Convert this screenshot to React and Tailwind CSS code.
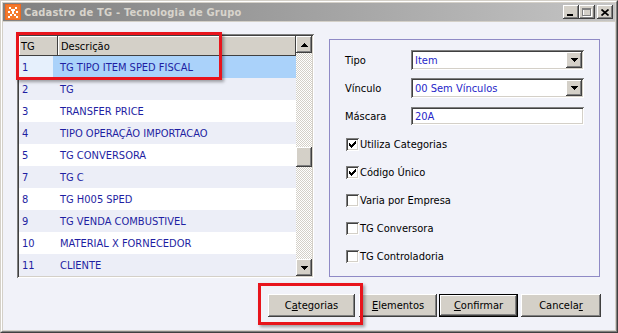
import React from "react";

const RAISED =
  "shadow-[inset_-1px_-1px_#404040,inset_1px_1px_#ffffff,inset_-2px_-2px_#808080,inset_2px_2px_#d4d0c8]";
const SUNKEN =
  "shadow-[inset_1px_1px_#808080,inset_-1px_-1px_#ffffff,inset_2px_2px_#404040,inset_-2px_-2px_#d4d0c8]";

const rows = [
  ["1", "TG TIPO ITEM SPED FISCAL"],
  ["2", "TG"],
  ["3", "TRANSFER PRICE"],
  ["4", "TIPO OPERAÇÃO IMPORTACAO"],
  ["5", "TG CONVERSORA"],
  ["7", "TG C"],
  ["8", "TG H005 SPED"],
  ["9", "TG VENDA COMBUSTIVEL"],
  ["10", "MATERIAL X FORNECEDOR"],
  ["11", "CLIENTE"],
];

function TriDown() {
  return (
    <svg width="7" height="4" viewBox="0 0 7 4" shapeRendering="crispEdges">
      <polygon points="0,0 7,0 3.5,4" fill="#000" />
    </svg>
  );
}
function TriUp() {
  return (
    <svg width="7" height="4" viewBox="0 0 7 4" shapeRendering="crispEdges">
      <polygon points="3.5,0 7,4 0,4" fill="#000" />
    </svg>
  );
}

function Combo({ value }) {
  return (
    <div className={`w-[173px] h-[20px] bg-white p-[2px] flex items-stretch ${SUNKEN}`}>
      <div className="flex-1 flex items-center pl-[2px] text-[#2626c8]">{value}</div>
      <div className={`w-[16px] bg-[#d4d0c8] flex items-center justify-center ${RAISED}`}>
        <TriDown />
      </div>
    </div>
  );
}

function Check({ checked, label }) {
  return (
    <div className="h-[28px] flex items-center pl-[1px]">
      <div className={`w-[13px] h-[13px] bg-white flex items-center justify-center ${SUNKEN}`}>
        {checked && (
          <svg width="7" height="7" viewBox="0 0 7 7" shapeRendering="crispEdges">
            <polygon points="0,2 2,4 7,-1 7,2 2,7 0,5" fill="#000" />
          </svg>
        )}
      </div>
      <span className="ml-[1px] text-black">{label}</span>
    </div>
  );
}

function Btn({ w, children, isDefault }) {
  const inner = (
    <div className={`h-full w-full bg-[#d4d0c8] flex items-center justify-center text-black ${RAISED}`}>
      {children}
    </div>
  );
  return (
    <div className={`h-[23px] ${w} ${isDefault ? "border border-black" : ""}`}>{inner}</div>
  );
}

function U({ children }) {
  return <span className="underline underline-offset-[1px]">{children}</span>;
}

export default function App() {
  return (
    <div className="relative w-[618px] h-[333px] overflow-hidden bg-[#d4d0c8] border border-t-[#d4d0c8] border-l-[#d4d0c8] border-r-[#404040] border-b-[#404040] font-['DejaVu_Sans_Condensed','DejaVu_Sans',sans-serif] [font-stretch:condensed] text-[11px] leading-none">
      <div className="flex flex-col h-full border border-t-white border-l-white border-r-[#808080] border-b-[#808080] p-[1px]">
        {/* Title bar */}
        <div className="h-[18px] shrink-0 flex items-center bg-linear-to-r from-[#808080] to-[#c4c4c4] pl-[2px] pr-[2px]">
          <svg width="16" height="16" viewBox="0 0 16 16" shapeRendering="crispEdges">
            <rect width="16" height="16" fill="#ee6a22" />
            <rect x="1" y="1" width="14" height="14" fill="#f47a2c" />
            <rect x="4" y="3" width="2" height="2" fill="#fff" />
            <rect x="10" y="3" width="2" height="2" fill="#fff" />
            <rect x="6" y="5" width="4" height="2" fill="#fff" />
            <rect x="3" y="7" width="2" height="2" fill="#fff" />
            <rect x="7" y="7" width="2" height="3" fill="#fff" />
            <rect x="11" y="7" width="2" height="2" fill="#fff" />
            <rect x="5" y="10" width="2" height="2" fill="#fff" />
            <rect x="9" y="10" width="2" height="2" fill="#fff" />
            <rect x="3" y="12" width="2" height="2" fill="#fff" />
            <rect x="11" y="12" width="2" height="2" fill="#fff" />
          </svg>
          <span className="ml-[3px] font-bold text-[11px] tracking-[0.2px] text-[#d8d4cc]">
            Cadastro de TG - Tecnologia de Grupo
          </span>
          <div className="ml-auto flex items-center">
            <div className={`w-[16px] h-[14px] bg-[#d4d0c8] flex items-end pl-[4px] pb-[3px] ${RAISED}`}>
              <div className="w-[6px] h-[2px] bg-black" />
            </div>
            <div className={`w-[16px] h-[14px] bg-[#d4d0c8] flex items-center justify-center ${RAISED}`}>
              <svg width="10" height="9" viewBox="0 0 10 9" shapeRendering="crispEdges">
                <rect x="1.5" y="1.5" width="8" height="7" fill="none" stroke="#fff" />
                <rect x="0.5" y="0.5" width="8" height="7" fill="none" stroke="#808080" />
                <rect x="0" y="1" width="9" height="1" fill="#808080" />
              </svg>
            </div>
            <div className={`ml-[2px] w-[16px] h-[14px] bg-[#d4d0c8] flex items-center justify-center ${RAISED}`}>
              <svg width="8" height="7" viewBox="0 0 8 7">
                <path d="M0.5 0.5 L7.5 6.5 M7.5 0.5 L0.5 6.5" stroke="#000" strokeWidth="1.7" />
              </svg>
            </div>
          </div>
        </div>

        {/* Body */}
        <div className="mt-[1px] flex-1 bg-[#f1f2f9] flex flex-col">
          <div className="flex items-start ml-[14px] mt-[12px]">
            {/* Grid */}
            <div className={`w-[297px] h-[244px] p-[2px] bg-white ${SUNKEN}`}>
              <div className="flex h-full">
                <div className="flex-1 flex flex-col">
                  <div className="h-[20px] flex bg-[#d4d0c8] text-black">
                    <div className="w-[39px] h-full flex items-center pl-[2px] shadow-[inset_-1px_-1px_#404040,inset_1px_1px_#ffffff]">
                      TG
                    </div>
                    <div className="flex-1 h-full flex items-center pl-[3px] shadow-[inset_-1px_-1px_#404040,inset_1px_1px_#ffffff]">
                      Descrição
                    </div>
                  </div>
                  {rows.map(([n, d], i) => {
                    const sel = i === 0;
                    const alt = i % 2 === 1;
                    return (
                      <div
                        key={n}
                        className={`h-[22px] flex text-[#1e1ea2] ${
                          sel ? "bg-[#aad2fa]" : alt ? "bg-[#eceef7]" : "bg-white"
                        }`}
                      >
                        <div
                          className={`w-[34px] h-full flex items-center pl-[3px] ${
                            sel ? "bg-[#e6f0fc]" : ""
                          }`}
                        >
                          {n}
                        </div>
                        <div className="flex-1 h-full flex items-center pl-[7px]">{d}</div>
                      </div>
                    );
                  })}
                </div>
                {/* Scrollbar */}
                <div className="w-[16px] flex flex-col">
                  <div className={`h-[17px] bg-[#d4d0c8] flex items-center justify-center ${RAISED}`}>
                    <TriUp />
                  </div>
                  <div className="flex-1 flex flex-col bg-[repeating-conic-gradient(#d4d0c8_0%_25%,#ffffff_0%_50%)] bg-[length:2px_2px]">
                    <div className="h-[94px]" />
                    <div className={`h-[20px] bg-[#d4d0c8] ${RAISED}`} />
                  </div>
                  <div className={`h-[17px] bg-[#d4d0c8] flex items-center justify-center ${RAISED}`}>
                    <TriDown />
                  </div>
                </div>
              </div>
            </div>

            {/* Right panel */}
            <div className="ml-[15px] mt-[5px] w-[271px] h-[238px] border border-[#8f8ac6] pl-[15px] pt-[6px]">
              <div className="h-[28px] flex items-center">
                <span className="w-[66px] text-black">Tipo</span>
                <Combo value="Item" />
              </div>
              <div className="h-[28px] flex items-center">
                <span className="w-[66px] text-black">Vínculo</span>
                <Combo value="00 Sem Vínculos" />
              </div>
              <div className="h-[28px] flex items-center">
                <span className="w-[66px] text-black">Máscara</span>
                <div className={`w-[173px] h-[18px] bg-white p-[2px] pl-[4px] flex items-center text-[#2626c8] ${SUNKEN}`}>
                  20A
                </div>
              </div>
              <Check checked label="Utiliza Categorias" />
              <Check checked label="Código Único" />
              <Check label="Varia por Empresa" />
              <Check label="TG Conversora" />
              <Check label="TG Controladoria" />
            </div>
          </div>

          {/* Buttons */}
          <div className="mt-[16px] flex justify-end pr-[14px]">
            <Btn w="w-[87px]">
              C<U>a</U>tegorias
            </Btn>
            <div className="w-[4px]" />
            <Btn w="w-[78px]">
              <U>E</U>lementos
            </Btn>
            <div className="w-[2px]" />
            <Btn w="w-[79px]" isDefault>
              <U>C</U>onfirmar
            </Btn>
            <div className="w-[3px]" />
            <Btn w="w-[80px]">
              Cancela<U>r</U>
            </Btn>
          </div>
        </div>
      </div>

      {/* Red annotation boxes */}
      <div className="absolute left-[15px] top-[31px] w-[206px] h-[48px] border-[3px] border-[#e8141c] shadow-[2px_2px_3px_rgba(0,0,0,0.35)]" />
      <div className="absolute left-[257px] top-[282px] w-[105px] h-[42px] border-[3px] border-[#e8141c] shadow-[2px_2px_3px_rgba(0,0,0,0.35)]" />
    </div>
  );
}
